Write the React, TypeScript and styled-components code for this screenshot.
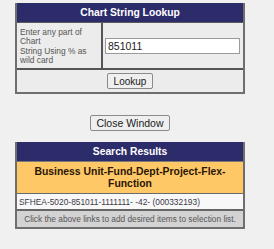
import React from 'react';
import styled, { createGlobalStyle } from 'styled-components';

const GlobalStyle = createGlobalStyle`
  body {
    margin: 0;
    background: #f0f0f0;
    font-family: "Liberation Sans", Arial, sans-serif;
  }
`;

const Page = styled.div`
  width: 230px;
  padding: 3px 0 0 15px;
  display: flex;
  flex-direction: column;
  align-items: center;
`;

const Panel = styled.div`
  width: 100%;
  box-sizing: border-box;
  border: 2px solid #6e6e6e;
  border-top: none;
  background: #ececec;
`;

const Header = styled.div`
  height: 19px;
  background: #2d2c6b;
  color: #fff;
  font-weight: bold;
  font-size: 10.3px;
  display: flex;
  align-items: center;
  justify-content: center;
`;

const InputRow = styled.div`
  display: grid;
  grid-template-columns: 86px 1fr;
  height: 45px;
  border-top: 1px solid #5a5a5a;
`;

const LabelCell = styled.div`
  border-right: 2px solid #555;
  padding: 5px 3px 0 3px;
  font-size: 8.4px;
  line-height: 9.4px;
  color: #555;
`;

const InputCell = styled.div`
  display: flex;
  align-items: center;
  padding: 0 3px 0 2px;
`;

const TextInput = styled.input`
  width: 100%;
  height: 16px;
  box-sizing: border-box;
  border: 1px solid #9a9a9a;
  background: #fff;
  font-family: inherit;
  font-size: 10.5px;
  color: #222;
  padding: 0 2px;
  outline: none;
`;

const ButtonRow = styled.div`
  height: 22px;
  border-top: 2px solid #555;
  display: flex;
  align-items: center;
  justify-content: center;
`;

const Button = styled.button<{ $w: number }>`
  width: ${p => p.$w}px;
  height: 16px;
  padding: 0;
  box-sizing: border-box;
  background: #efefef;
  border: 1px solid #8a8a8a;
  border-radius: 2px;
  font-family: inherit;
  font-size: ${p => (p.$w > 60 ? 10.5 : 10)}px;
  color: #222;
`;

const CloseWrap = styled.div`
  margin: 19px 0 11px;
`;

const SubHeader = styled.div`
  background: #fdc865;
  border-top: 1px solid #7a7a7a;
  height: 32px;
  box-sizing: border-box;
  display: flex;
  align-items: center;
  justify-content: center;
  text-align: center;
  font-weight: bold;
  font-size: 10.4px;
  line-height: 11.5px;
  color: #2a1606;
  padding: 0 6px;
`;

const DataRow = styled.div`
  background: #f8f8f8;
  border-top: 1px solid #6a6a6a;
  height: 16px;
  box-sizing: border-box;
  display: flex;
  align-items: center;
  padding-left: 2px;
  font-size: 8.4px;
  color: #3a3a48;
`;

const Footer = styled.div`
  background: #d3d3d3;
  border-top: 2px solid #666;
  height: 18px;
  box-sizing: border-box;
  display: flex;
  align-items: center;
  justify-content: center;
  font-size: 8.3px;
  color: #555;
  white-space: nowrap;
`;

export default function App() {
  return (
    <>
      <GlobalStyle />
      <Page>
        <Panel>
          <Header>Chart String Lookup</Header>
          <InputRow>
            <LabelCell>
              Enter any part of<br />Chart<br />String Using % as<br />wild card
            </LabelCell>
            <InputCell>
              <TextInput defaultValue="851011" />
            </InputCell>
          </InputRow>
          <ButtonRow>
            <Button $w={46}>Lookup</Button>
          </ButtonRow>
        </Panel>
        <CloseWrap>
          <Button $w={80}>Close Window</Button>
        </CloseWrap>
        <Panel>
          <Header>Search Results</Header>
          <SubHeader>Business Unit-Fund-Dept-Project-Flex-Function</SubHeader>
          <DataRow>SFHEA-5020-851011-1111111- -42- (000332193)</DataRow>
          <Footer>Click the above links to add desired items to selection list.</Footer>
        </Panel>
      </Page>
    </>
  );
}
